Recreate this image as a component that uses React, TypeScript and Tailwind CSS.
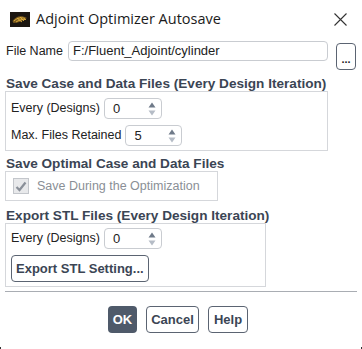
import { useState } from "react";

type SpinProps = {
  value: string;
  width: string;
};

function Spinner({ value, width }: SpinProps) {
  return (
    <div
      className={`flex h-[21px] shrink-0 items-center justify-between rounded-[4px] border border-[#c9ccd1] bg-white pl-[8px] pr-[4px] ${width}`}
    >
      <span className="text-[13px] text-[#222]">{value}</span>

      <svg width="10" height="16" viewBox="0 0 10 16">
        <path d="M1.5 6.5 L5 1.5 L8.5 6.5 Z" fill="#6f7a89" />
        <path d="M1.5 9.5 L5 14.5 L8.5 9.5 Z" fill="#b5bcc6" />
      </svg>
    </div>
  );
}

function Heading({ children }: { children: React.ReactNode }) {
  return (
    <div className="whitespace-nowrap pl-[1px] text-[13.6px] font-bold leading-[14px] text-[#3b4554]">
      {children}
    </div>
  );
}

function FluentIcon() {
  return (
    <svg width="20" height="15" viewBox="0 0 20 15">
      <rect width="20" height="15" fill="#1a1510" />
      <path
        d="M2.5 9 C6 4, 11 3, 17 6 C14 8, 9 11, 3.5 11 Z"
        fill="#7a5a1c"
      />
      <path
        d="M4 9 C7 6, 11 5, 15 6.5 M6 10 C9 8, 12 7, 16 7.5 M7 6 L12 10 M10 5 L14 9"
        stroke="#e0b040"
        strokeWidth="0.9"
        fill="none"
      />
    </svg>
  );
}

export default function App() {

  const [saveOptimal] =
    useState(true);

  return (

    <div className="relative h-[349px] w-[362px] overflow-hidden bg-white font-['Liberation_Sans',sans-serif] text-[12.5px] text-[#222]">

      {/* title bar */}
      <div className="flex h-[38px] items-center pl-[10px] pr-[15px]">

        <FluentIcon />

        <span className="ml-[6px] font-['Open_Sans',sans-serif] text-[14.5px] text-[#1b1b1b]">
          Adjoint Optimizer Autosave
        </span>

        <svg className="ml-auto" width="13" height="13" viewBox="0 0 13 13">
          <path d="M0.5 0.5 L12.5 12.5 M12.5 0.5 L0.5 12.5" stroke="#333" strokeWidth="1.1" />
        </svg>

      </div>

      <div className="px-[5px]">

        {/* file name */}
        <div className="mt-[3px] flex items-start">

          <span className="mt-[2px] shrink-0 whitespace-nowrap pl-[1px] leading-[16px]">
            File Name
          </span>

          <div className="ml-[5px] flex h-[20px] w-[260px] shrink-0 items-center rounded-[4px] border border-[#c9ccd1] px-[4px] text-[13px]">
            F:/Fluent_Adjoint/cylinder
          </div>

          <div className="ml-[8px] mt-[2px] flex h-[27px] w-[20px] shrink-0 items-end justify-center rounded-[4px] border border-[#5b6472] pb-[4px] text-[11px] font-bold leading-none">
            ...
          </div>

        </div>

        <div className="mt-[7px]">
          <Heading>Save Case and Data Files (Every Design Iteration)</Heading>
        </div>

        <div className="w-[323px] border border-[#d5d7db] pb-[4px] pl-[5px] pt-[6px]">

          <div className="flex items-center">
            <span>Every (Designs)</span>
            <div className="ml-[4px]">
              <Spinner value="0" width="w-[58px]" />
            </div>
          </div>

          <div className="mt-[6px] flex items-center">
            <span>Max. Files Retained</span>
            <div className="ml-[4px]">
              <Spinner value="5" width="w-[57px]" />
            </div>
          </div>

        </div>

        <div className="mt-[6px]">
          <Heading>Save Optimal Case and Data Files</Heading>
        </div>

        <div className="flex h-[30px] w-[213px] items-center border border-[#d5d7db] pl-[7px]">

          <div className="flex h-[16px] w-[16px] items-center justify-center border border-[#c3c6cb] bg-[#e8e9eb]">
            {saveOptimal && (
              <svg width="12" height="11" viewBox="0 0 12 11">
                <path d="M1.5 6 L4.5 9 L10.5 1.5" stroke="#8a9099" strokeWidth="2.2" fill="none" />
              </svg>
            )}
          </div>

          <span className="ml-[8px] text-[#8a8f96]">
            Save During the Optimization
          </span>

        </div>

        <div className="mt-[8px]">
          <Heading>Export STL Files (Every Design Iteration)</Heading>
        </div>

        <div className="w-[261px] border border-[#d5d7db] pb-[4px] pl-[5px] pt-[4px]">

          <div className="flex items-center">
            <span>Every (Designs)</span>
            <div className="ml-[4px]">
              <Spinner value="0" width="w-[58px]" />
            </div>
          </div>

          <div className="mt-[6px] inline-flex h-[27px] items-center rounded-[4px] border border-[#5b6472] px-[4px] text-[13px] font-bold text-[#3b4554]">
            Export STL Setting...
          </div>

        </div>

        <div className="mt-[4px] h-px w-[352px] bg-[#a9adb3]" />

        {/* actions */}
        <div className="mt-[14px] flex justify-center gap-[9px] pr-[6px]">

          <div className="flex h-[27px] w-[29px] items-center justify-center rounded-[4px] bg-[#4f5a6a] text-[13px] font-bold text-white">
            OK
          </div>

          <div className="flex h-[27px] w-[53px] items-center justify-center rounded-[4px] border border-[#5b6472] text-[13px] font-bold text-[#3b4554]">
            Cancel
          </div>

          <div className="flex h-[27px] w-[40px] items-center justify-center rounded-[4px] border border-[#5b6472] text-[13px] font-bold text-[#3b4554]">
            Help
          </div>

        </div>

      </div>

      <div className="absolute bottom-0 left-0 h-[2px] w-px bg-[#333]" />
      <div className="absolute bottom-0 right-0 h-[2px] w-px bg-[#333]" />

    </div>

  );

}
